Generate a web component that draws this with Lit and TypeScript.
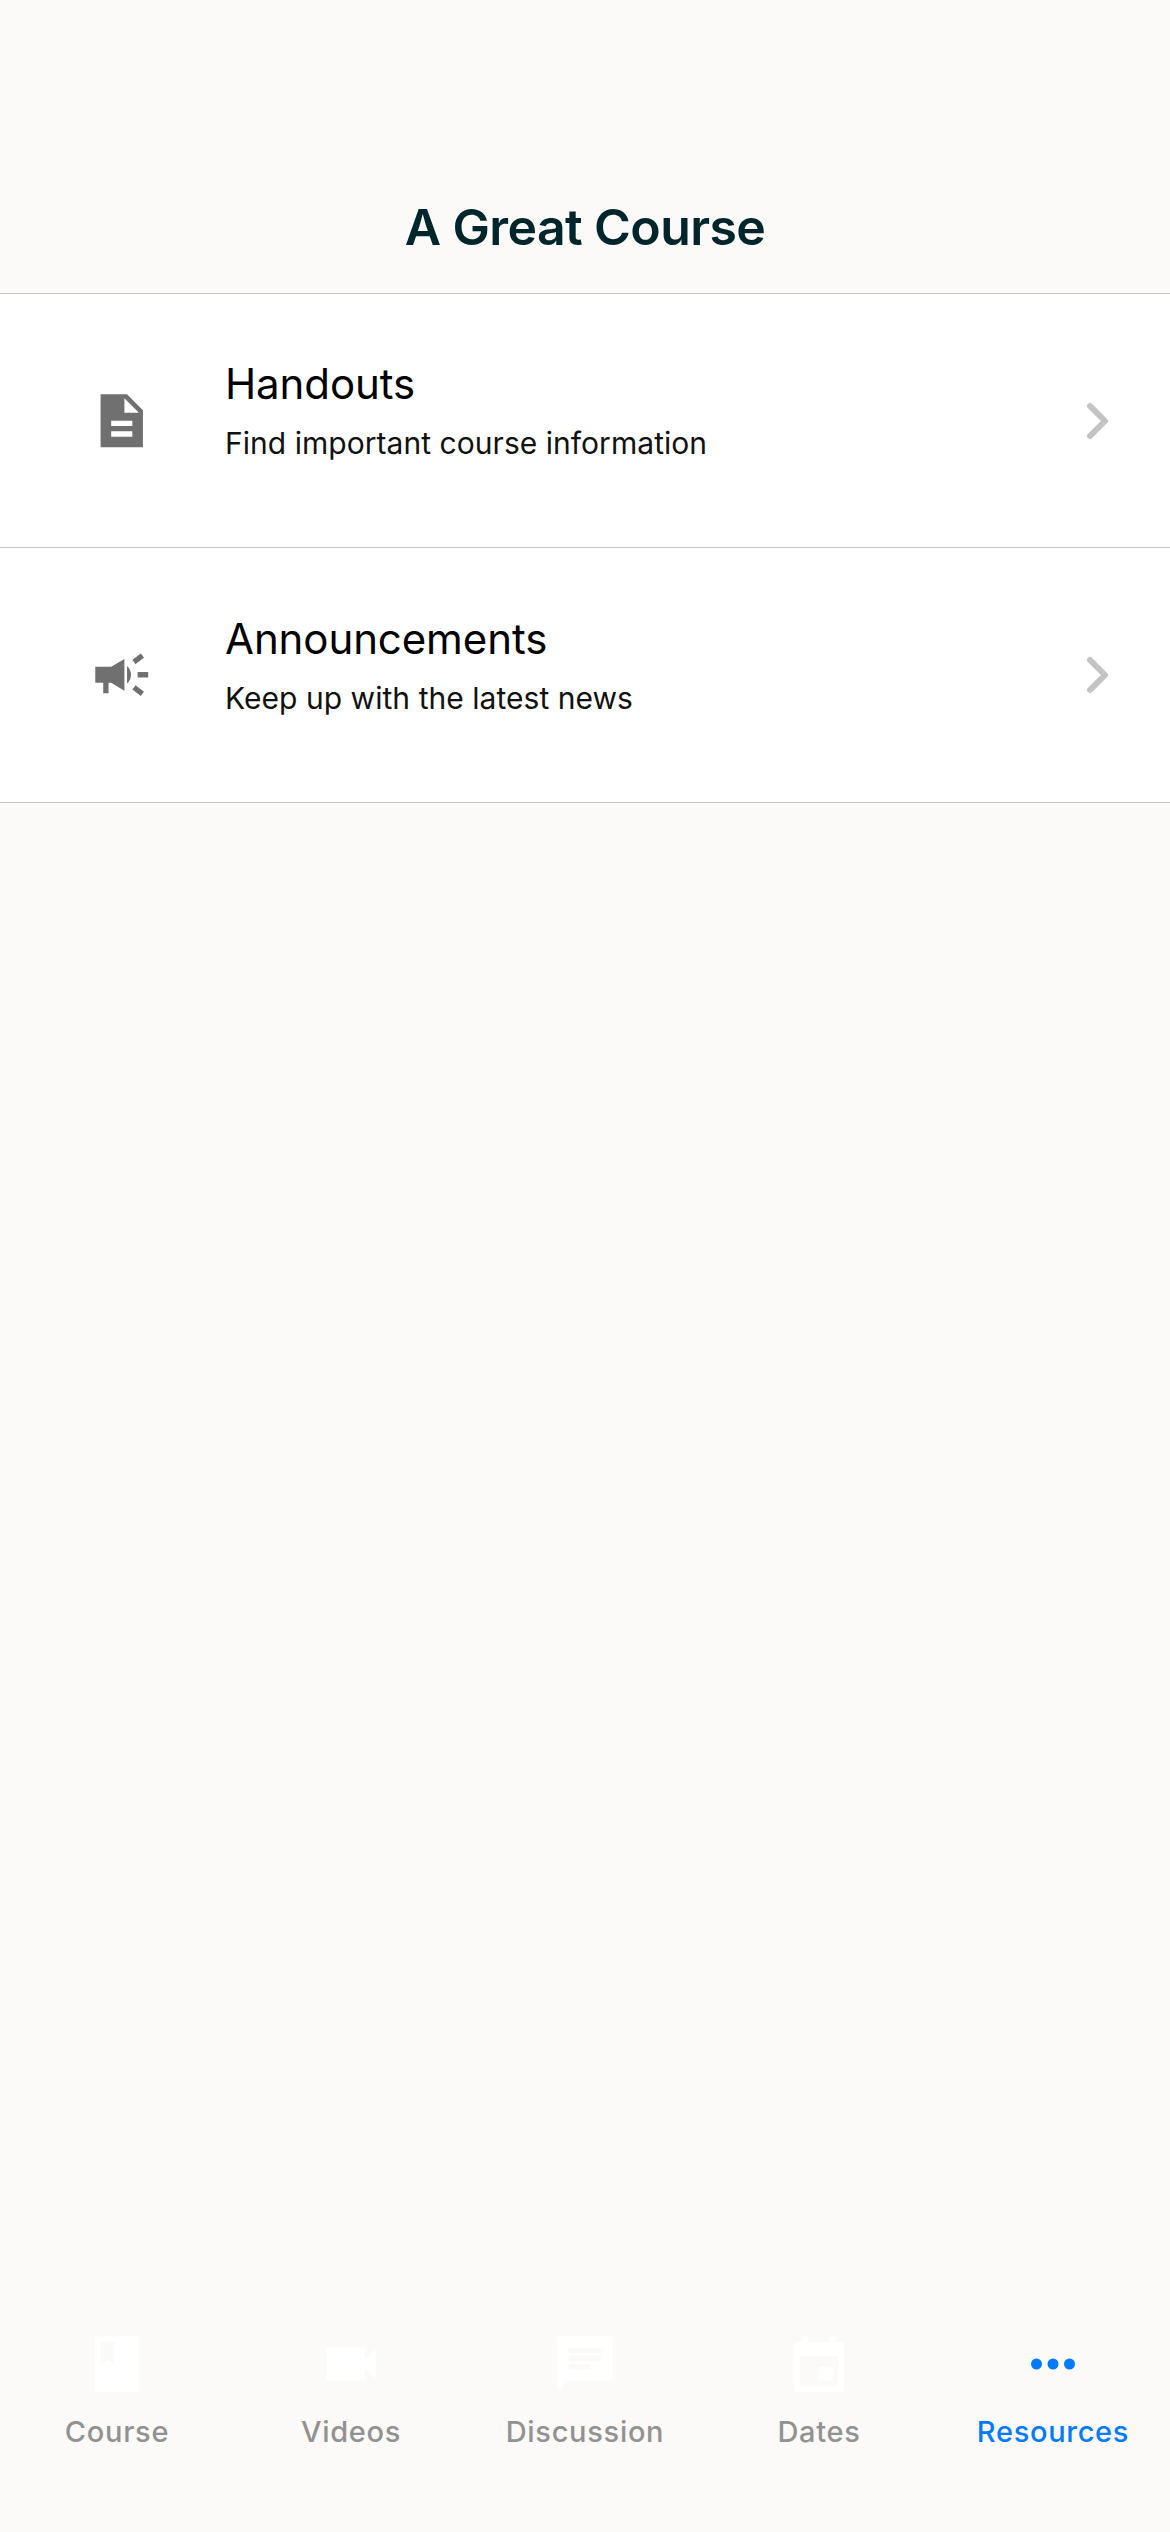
import { LitElement, html, css, svg } from "lit";
import { customElement } from "lit/decorators.js";
import { classMap } from "lit/directives/class-map.js";

const rows = [
  {
    title: "Handouts",
    subtitle: "Find important course information",
    icon: svg`<path fill-rule="evenodd" d="M14 2H4v20h16V8l-6-6zM16 18H8v-2h8v2zm0-4H8v-2h8v2zm-3-5V3.5L18.5 9H13z"/>`,
  },
  {
    title: "Announcements",
    subtitle: "Keep up with the latest news",
    icon: svg`<path d="M18 11v2h4v-2h-4zM16 17.61c.96.71 2.21 1.65 3.2 2.39.4-.53.8-1.07 1.2-1.6-.99-.74-2.24-1.68-3.2-2.4-.4.54-.8 1.08-1.2 1.61zM20.4 5.6c-.4-.53-.8-1.07-1.2-1.6-.99.74-2.24 1.68-3.2 2.4.4.53.8 1.07 1.2 1.6.96-.72 2.21-1.65 3.2-2.4zM8 9H2v6h3v4h2v-4h1l5 3V6L8 9zM15.5 12c0-1.33-.58-2.53-1.5-3.35v6.69c.92-.81 1.5-2.01 1.5-3.34z"/>`,
  },
];

const tabs = [
  {
    label: "Course",
    active: false,
    icon: svg`<path fill-rule="evenodd" d="M20 2H4v20h16V2zM6 4h5v8l-2.5-1.5L6 12V4z"/>`,
  },
  {
    label: "Videos",
    active: false,
    icon: svg`<path d="M17 10.5V6H3v12h14v-4.5l4 4v-11l-4 4z"/>`,
  },
  {
    label: "Discussion",
    active: false,
    icon: svg`<path fill-rule="evenodd" d="M22 2H2v20l4-4h16V2zM6 9h12v2H6V9zm8 5H6v-2h8v2zm4-6H6V6h12v2z"/>`,
  },
  {
    label: "Dates",
    active: false,
    icon: svg`<path fill-rule="evenodd" d="M17 13h-5v5h5v-5zM16 2v2H8V2H6v2H3v18h18V4h-3V2h-2zm3 18H5V9h14v11z"/>`,
  },
  {
    label: "Resources",
    active: true,
    icon: svg`<circle cx="6" cy="12" r="2"/><circle cx="12" cy="12" r="2"/><circle cx="18" cy="12" r="2"/>`,
  },
];

@customElement("app-root")
export class AppRoot extends LitElement {
  static styles = css`
    :host {
      display: flex;
      flex-direction: column;
      box-sizing: border-box;
      width: 1170px;
      height: 2532px;
      overflow: hidden;
      background: #fbfaf8;
      color: #000;
      font-family: Inter, "Liberation Sans", sans-serif;
    }
    .header {
      box-sizing: border-box;
      height: 294px;
      padding-top: 197px;
      border-bottom: 1px solid #c6c6c6;
      text-align: center;
    }
    .heading {
      margin: 0;
      font-size: 50px;
      line-height: 60px;
      font-weight: 600;
      letter-spacing: -0.6px;
      color: #00262b;
    }
    .row {
      box-sizing: border-box;
      display: grid;
      grid-template-columns: 63.5px 1fr 36px;
      column-gap: 72px;
      height: 254px;
      padding: 0 52px 0 89.5px;
      align-items: center;
      background: #fff;
      border-bottom: 1px solid #c6c6c6;
    }
    .row:last-child {
      height: 255px;
    }
    .row-icon {
      display: block;
      width: 63.5px;
      height: 63.5px;
      fill: #707070;
    }
    .row-text {
      display: flex;
      flex-direction: column;
      gap: 13px;
      padding-bottom: 20px;
    }
    .row-title {
      font-size: 42px;
      line-height: 52px;
      letter-spacing: -0.1px;
    }
    .row-subtitle {
      font-size: 30px;
      line-height: 40px;
      letter-spacing: 0.04px;
      color: #111;
    }
    .chevron {
      display: block;
      width: 36px;
      height: 42px;
      fill: none;
      stroke: #c4c4c6;
      stroke-width: 6;
      stroke-linecap: round;
      stroke-linejoin: round;
    }
    .tabs {
      display: grid;
      grid-template-columns: repeat(5, 1fr);
      margin-top: auto;
      height: 201px;
    }
    .tab {
      display: flex;
      flex-direction: column;
      align-items: center;
      gap: 17px;
      color: #929292;
    }
    .tab-icon {
      display: block;
      width: 66px;
      height: 66px;
      fill: #fff;
    }
    .tab-label {
      font-size: 29px;
      line-height: 36px;
      font-weight: 500;
      letter-spacing: 0.7px;
    }
    .active {
      color: #007aff;
    }
    .active .tab-icon {
      fill: #007aff;
    }
  `;

  render() {
    return html`
      <header class="header"><h1 class="heading">A Great Course</h1></header>
      <main class="list">
        ${rows.map(
          (row) => html`
            <div class="row">
              <svg class="row-icon" viewBox="0 0 24 24">${row.icon}</svg>
              <div class="row-text">
                <span class="row-title">${row.title}</span>
                <span class="row-subtitle">${row.subtitle}</span>
              </div>
              <svg class="chevron" viewBox="0 0 36 42"><path d="M8 6l15 15L8 36"/></svg>
            </div>
          `
        )}
      </main>
      <nav class="tabs">
        ${tabs.map(
          (tab) => html`
            <div class=${classMap({ tab: true, active: tab.active })}>
              <svg class="tab-icon" viewBox="0 0 24 24">${tab.icon}</svg>
              <span class="tab-label">${tab.label}</span>
            </div>
          `
        )}
      </nav>
    `;
  }
}
